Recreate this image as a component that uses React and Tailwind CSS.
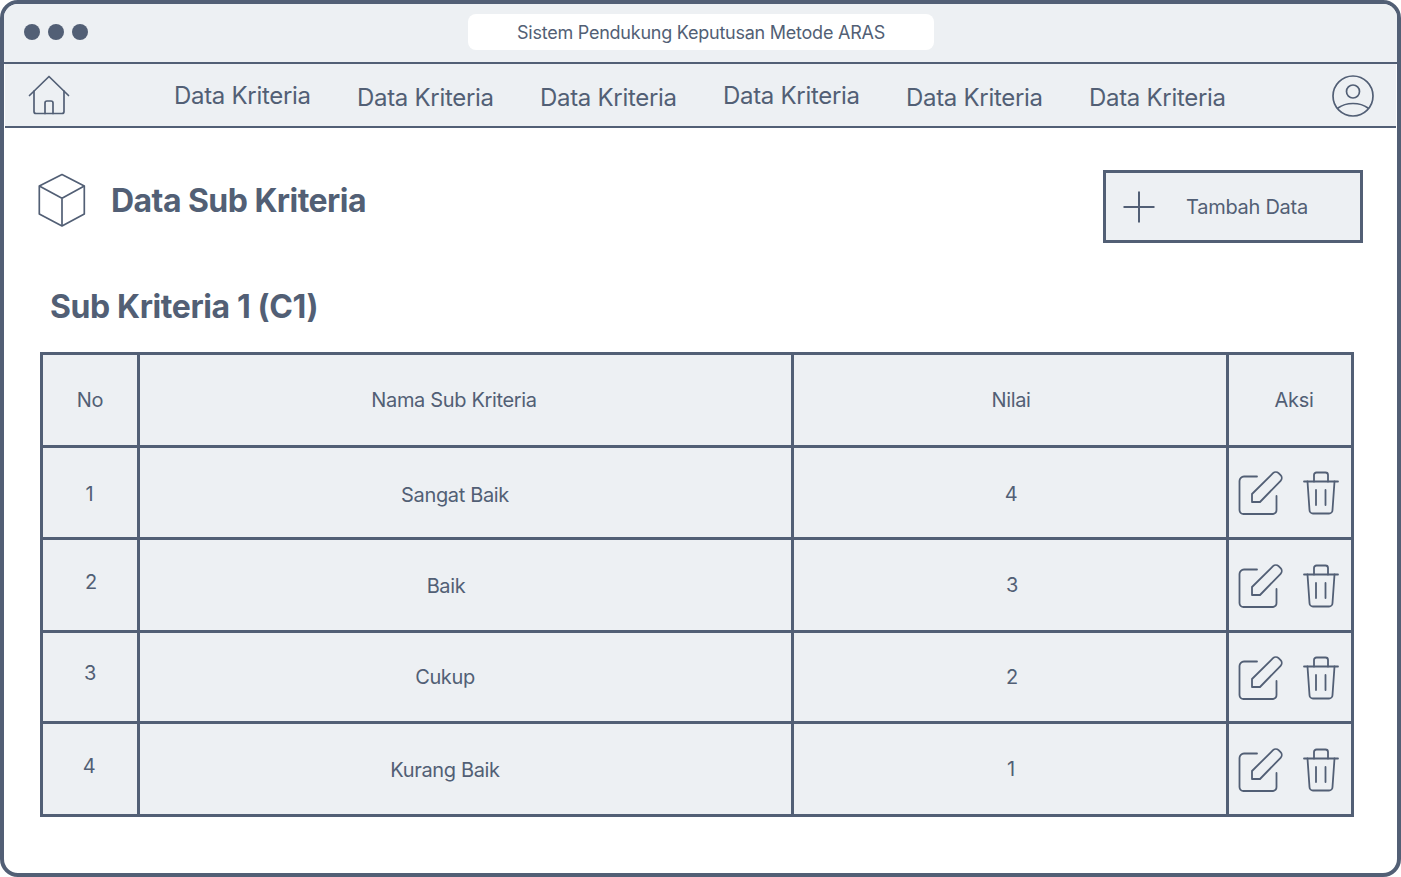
const navItems = [
  "pt-[6px]",
  "pt-[8px]",
  "pt-[8px]",
  "pt-[6px]",
  "pt-[8px]",
  "pt-[8px]",
];

const rows = [
  { no: "1", noClass: "pr-[1px] pt-[3px]", name: "Sangat Baik", nameClass: "pr-[21px] pt-[5px]", val: "4", valClass: "pl-[2px] pt-[3px]" },
  { no: "2", noClass: "pl-[2px] pb-[6px]", name: "Baik", nameClass: "pr-[39px] pt-[2px]", val: "3", valClass: "pl-[4px]" },
  { no: "3", noClass: "pb-[8px]", name: "Cukup", nameClass: "pr-[41px]", val: "2", valClass: "pl-[4px]" },
  { no: "4", noClass: "pr-[2px] pb-[6px]", name: "Kurang Baik", nameClass: "pr-[41px] pt-[2px]", val: "1", valClass: "pl-[2px]" },
];

const cell = "flex items-center justify-center bg-[#edf0f3]";

function HomeIcon() {
  return (
    <svg width="42" height="42" viewBox="0 0 42 42" fill="none" stroke="#525f75" strokeWidth="1.7" strokeLinecap="round" strokeLinejoin="round">
      <path d="M1.5 20.5L21 1.5L40.5 20.5" />
      <path d="M6 16v20.5a2 2 0 0 0 2 2h26a2 2 0 0 0 2-2V16" />
      <path d="M17 38.5V28a2 2 0 0 1 2-2h4a2 2 0 0 1 2 2v10.5" />
    </svg>
  );
}

function UserIcon() {
  return (
    <svg width="42" height="42" viewBox="0 0 42 42" fill="none" stroke="#525f75" strokeWidth="1.7" strokeLinecap="round">
      <circle cx="21" cy="21" r="20" />
      <circle cx="21" cy="16.5" r="6.5" />
      <path d="M6 33C10 30 15 28.5 21 28.5S32 30 36 33" />
    </svg>
  );
}

function CubeIcon() {
  return (
    <svg width="48" height="54" viewBox="0 0 48 54" fill="none" stroke="#525f75" strokeWidth="1.7" strokeLinejoin="round">
      <path d="M24 1.5L46.3 13V41L24 53L1.3 41V13Z" />
      <path d="M1.3 13L24 25.3L46.3 13M24 25.3V53" />
    </svg>
  );
}

function PlusIcon() {
  return (
    <svg width="32" height="32" viewBox="0 0 32 32" fill="none" stroke="#525f75" strokeWidth="2">
      <path d="M0.5 16H31.5M16 0.5V31.5" />
    </svg>
  );
}

function EditIcon() {
  return (
    <svg width="46" height="46" viewBox="0 0 46 46" fill="none" stroke="#525f75" strokeWidth="1.8" strokeLinecap="round" strokeLinejoin="round">
      <path d="M19 6.5H6a4.5 4.5 0 0 0-4.5 4.5v29a4 4 0 0 0 4 4h29.5a4 4 0 0 0 3.5-4V26" />
      <path d="M14 32v-8L35 3.2a4 4 0 0 1 5.6 0l2 2a4 4 0 0 1 0 5.6L22 32z" />
    </svg>
  );
}

function TrashIcon() {
  return (
    <svg width="36" height="44" viewBox="0 0 36 44" fill="none" stroke="#525f75" strokeWidth="1.8" strokeLinecap="round" strokeLinejoin="round">
      <path d="M1 10.5H35" />
      <path d="M11 10.5V4a2.5 2.5 0 0 1 2.5-2.5h9A2.5 2.5 0 0 1 25 4v6.5" />
      <path d="M4.5 10.5L6.5 39a3.5 3.5 0 0 0 3.5 3.5h16a3.5 3.5 0 0 0 3.5-3.5L31.5 10.5" />
      <path d="M13 19v15M22.5 19v15" />
    </svg>
  );
}

export default function App() {
  return (
    <div className="h-[877px] w-[1401px] overflow-hidden rounded-[18px] border-4 border-[#525f75] bg-white font-['Inter',sans-serif] text-[#525f75]">
      <div className="relative flex h-[58px] items-center gap-2 bg-[#edf0f3] pb-[2px] pl-5">
        <span className="h-4 w-4 rounded-full bg-[#525f75]" />
        <span className="h-4 w-4 rounded-full bg-[#525f75]" />
        <span className="h-4 w-4 rounded-full bg-[#525f75]" />
        <div className="ml-[372px] flex h-9 w-[466px] items-center justify-center rounded-lg bg-white text-[18px] tracking-[-0.24px]">
          Sistem Pendukung Keputusan Metode ARAS
        </div>
      </div>
      <div className="h-[2px] bg-[#525f75]" />
      <div className="ml-px mr-px flex h-[64px] items-center border-b-2 border-[#525f75] bg-[#edf0f3] pl-[23px] pr-[22px]">
        <div className="mt-[2px]">
          <HomeIcon />
        </div>
        <div className="ml-[104px] flex flex-1 gap-[47px] pb-[2px] text-[24px] tracking-[-0.3px]">
          {navItems.map((pad, i) => (
            <span key={i} className={`w-[136px] whitespace-nowrap ${pad}`}>Data Kriteria</span>
          ))}
        </div>
        <div className="mt-[2px]">
          <UserIcon />
        </div>
      </div>
      <div className="flex items-start justify-between pl-[34px] pr-[34px] pt-[42px]">
        <div className="flex items-center gap-[25px] pt-[3px]">
          <CubeIcon />
          <h1 className="pt-[2px] text-[32px] font-bold leading-[52px] tracking-[-0.55px]">Data Sub Kriteria</h1>
        </div>
        <button className="flex h-[73px] w-[260px] items-center border-[3px] border-[#525f75] bg-[#edf0f3] pl-[17px] text-[20px] tracking-[-0.27px]">
          <PlusIcon />
          <span className="ml-[31px]">Tambah Data</span>
        </button>
      </div>
      <h2 className="ml-[46px] mt-[40px] text-[32px] font-bold leading-[48px] tracking-[-0.4px]">Sub Kriteria 1 (C1)</h2>
      <div className="ml-[36px] mt-[21px] grid w-[1314px] grid-cols-[94px_651px_432px_122px] grid-rows-[90px_89px_90px_88px_90px] gap-[3px] bg-[#525f75] p-[3px] text-[20px] tracking-[-0.35px]">
        <div className={cell}>No</div>
        <div className={`${cell} pr-[23px]`}>Nama Sub Kriteria</div>
        <div className={`${cell} pl-[2px]`}>Nilai</div>
        <div className={`${cell} pl-[8px]`}>Aksi</div>
        {rows.map((r) => (
          <div key={r.no} className="contents">
            <div className={`${cell} ${r.noClass}`}>{r.no}</div>
            <div className={`${cell} ${r.nameClass}`}>{r.name}</div>
            <div className={`${cell} ${r.valClass}`}>{r.val}</div>
            <div className={`${cell} gap-[19px] pr-[3px] pt-[1px]`}>
              <EditIcon />
              <TrashIcon />
            </div>
          </div>
        ))}
      </div>
    </div>
  );
}
